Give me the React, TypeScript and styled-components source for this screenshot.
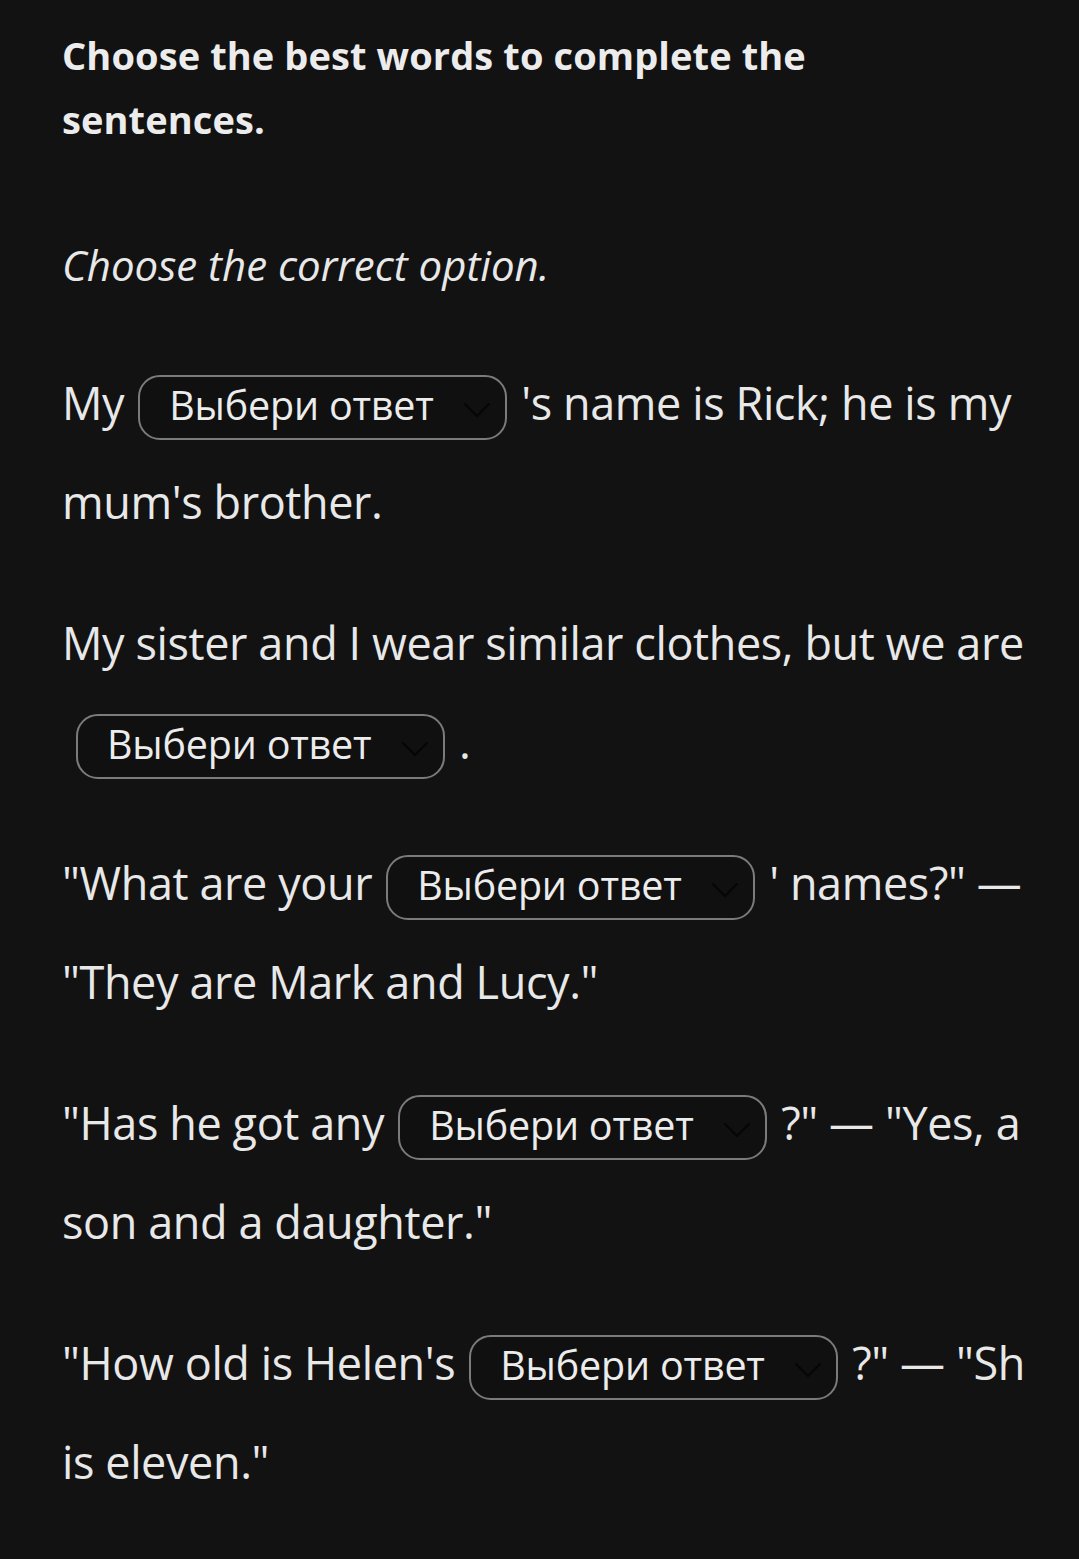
import React from "react";
import styled, { createGlobalStyle } from "styled-components";

const GlobalStyle = createGlobalStyle`
  html, body {
    margin: 0;
    padding: 0;
    background: #121212;
  }
  body {
    font-family: "Open Sans", "Noto Sans", sans-serif;
    color: #e8e8e8;
  }
`;

const Page = styled.div`
  width: 1079px;
  min-height: 1559px;
  background: #121212;
  overflow: hidden;
`;

const Clip = styled.div`
  width: 1025px;
  overflow: hidden;
`;

const Content = styled.div`
  width: 1021px;
  padding: 23px 0 40px 62px;
`;

const Heading = styled.h1`
  margin: 0;
  font-family: "Open Sans", sans-serif;
  font-weight: 700;
  font-size: 38px;
  line-height: 64px;
  letter-spacing: 0.1px;
  color: #ececec;
  max-width: 800px;
`;

const Instruction = styled.p`
  margin: 84px 0 0;
  font-family: "Open Sans", sans-serif;
  font-style: italic;
  font-size: 42px;
  line-height: 60px;
  color: #e8e8e8;
`;

const Sentences = styled.div`
  margin-top: 58px;
  display: flex;
  flex-direction: column;
  gap: 42px;
`;

const Sentence = styled.p`
  margin: 0;
  font-size: 45px;
  line-height: 99px;
  color: #e8e8e8;
  letter-spacing: -0.4px;
`;

const Select = styled.span`
  display: inline-flex;
  align-items: center;
  justify-content: space-between;
  box-sizing: border-box;
  width: 369px;
  height: 65px;
  margin: 0 14px;
  padding: 0 14px 4px 29px;
  border: 2px solid #7b7b7b;
  border-radius: 22px;
  background: #101010;
  vertical-align: middle;
  font-size: 39.5px;
  line-height: 1;
  color: #ececec;
  letter-spacing: -0.2px;
`;

const Chevron = () => (
  <svg width="28" height="16" viewBox="0 0 28 16" fill="none" style={{ marginTop: 8 }}>
    <polyline points="2,2 14,14 26,2" stroke="#050505" strokeWidth="2" strokeLinecap="round" strokeLinejoin="round" />
  </svg>
);

const Pill = () => (
  <Select>
    <span>Выбери ответ</span>
    <Chevron />
  </Select>
);

const items: [string, string][] = [
  ["My", "'s name is Rick; he is my mum's brother."],
  ["My sister and I wear similar clothes, but we aren't", "."],
  ["\"What are your", "' names?\" — \"They are Mark and Lucy.\""],
  ["\"Has he got any", "?\" — \"Yes, a son and a daughter.\""],
  ["\"How old is Helen's", "?\" — \"She is eleven.\""],
];

export default function App() {
  return (
    <Page>
      <GlobalStyle />
      <Clip>
        <Content>
          <Heading>Choose the best words to complete the sentences.</Heading>
          <Instruction>Choose the correct option.</Instruction>
          <Sentences>
            {items.map(([before, after], i) => (
              <Sentence key={i}>
                {before}
                <Pill />
                {after}
              </Sentence>
            ))}
          </Sentences>
        </Content>
      </Clip>
    </Page>
  );
}
